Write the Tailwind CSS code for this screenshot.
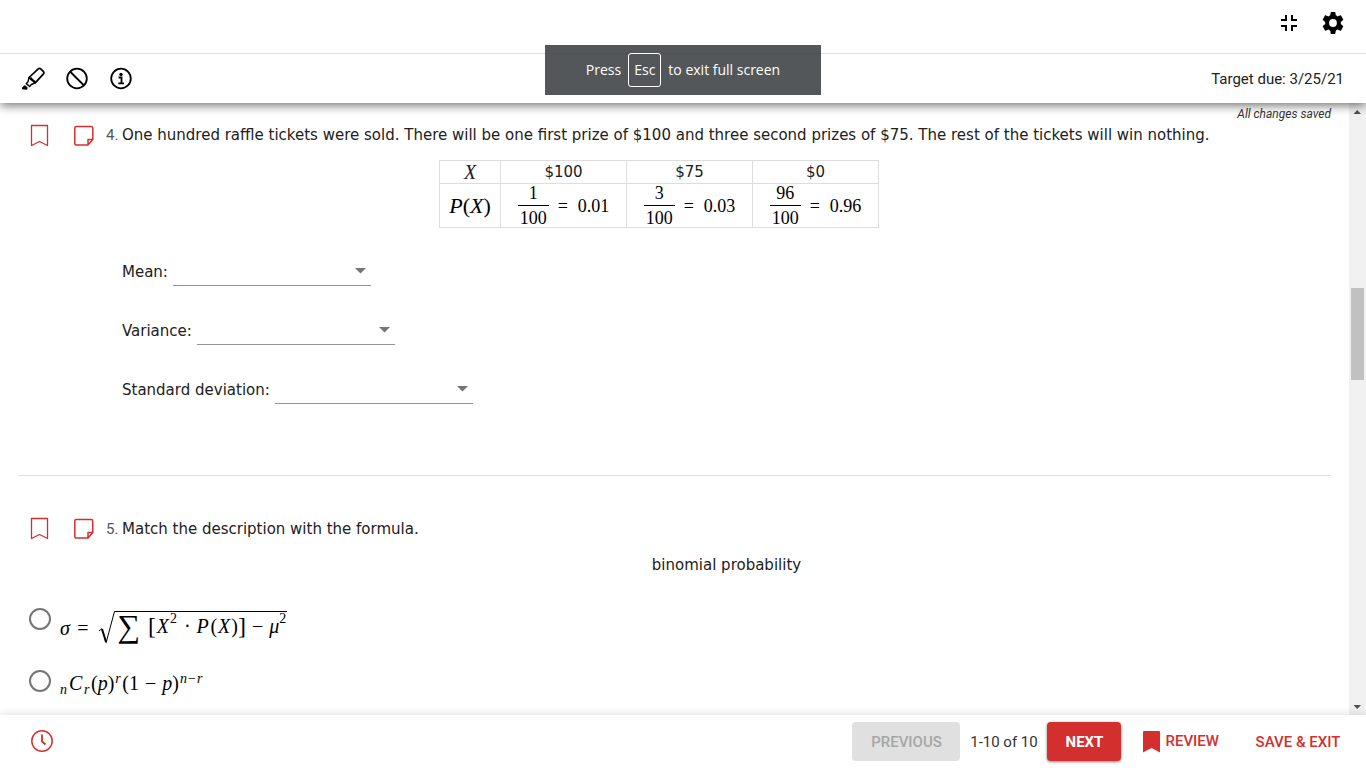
<!doctype html>
<html lang="en">
  <head>
    <meta charset="UTF-8" />
    <meta name="viewport" content="width=device-width, initial-scale=1.0" />
    <title>Assignment</title>
    <script src="https://cdn.jsdelivr.net/npm/@tailwindcss/browser@4"></script>
  </head>
  <body class="font-[Roboto,sans-serif] text-[#333333] bg-white">
    <div class="relative flex flex-col h-screen overflow-hidden">
      <header class="relative z-10 bg-white shadow-[0_2px_10px_rgba(0,0,0,0.6)]">
        <div class="flex items-center justify-end gap-5 h-[54px] px-[21px] pb-[8px] border-b border-[#e0e0e0] text-black">
          <button type="button" aria-label="Exit full screen">
            <svg class="w-6 h-6" viewBox="0 0 24 24" fill="none" stroke="currentColor" stroke-width="2">
              <path d="M4 9H9V4M20 9H15V4M4 15H9V20M20 15H15V20" />
            </svg>
          </button>
          <button type="button" aria-label="Settings">
            <svg class="w-6 h-6" viewBox="0 0 24 24" fill="currentColor">
              <path d="M19.800 13.100a8 8 0 0 0 0-2.200l2.300-1.800a.6.6 0 0 0 .14-.7l-2.200-3.800a.55.55 0 0 0-.68-.24l-2.700 1.100a8.200 8.200 0 0 0-1.900-1.100L14.350 1.500a.55.55 0 0 0-.55-.5h-3.600a.55.55 0 0 0-.55.5l-.41 2.860a8.200 8.200 0 0 0-1.900 1.100l-2.700-1.100a.55.55 0 0 0-.68.240L1.760 8.400a.6.6 0 0 0 .14.7l2.300 1.800a8 8 0 0 0 0 2.200l-2.300 1.800a.6.6 0 0 0-.14.7l2.200 3.800c.14.24.43.34.68.24l2.700-1.100a8.200 8.200 0 0 0 1.900 1.100l.41 2.860c.05.3.27.5.55.5h3.600c.28 0 .5-.2.55-.5l.41-2.860a8.200 8.200 0 0 0 1.900-1.100l2.700 1.100c.25.1.54 0 .68-.24l2.200-3.800a.6.6 0 0 0-.14-.7zM12 15.900a3.900 3.900 0 1 1 0-7.800 3.900 3.900 0 0 1 0 7.800z" />
            </svg>
          </button>
        </div>
        <div class="flex items-center gap-5 h-[49px] px-[22px] text-black">
          <button type="button" aria-label="Highlighter">
            <svg class="w-6 h-6" viewBox="0 0 24 24" fill="none" stroke="currentColor" stroke-width="1.700" stroke-linejoin="round">
              <path d="M7 10.500L16.300 1.800Q17.500 .8 18.700 1.800L21.300 4.300Q22.500 5.500 21.500 6.900L13.200 15.800L7 10.500z" />
              <path d="M7 10.500L6 14.800L4.300 16.600L7.600 19.500L9.300 17.500L13.200 15.800M9 10.500Q9.500 13 13.500 15" stroke-width="1.400" />
              <path d="M.6 21.400L2.800 19.200L4.800 21L4.300 22z" fill="currentColor" />
            </svg>
          </button>
          <button type="button" aria-label="Eliminate answers">
            <svg class="w-6 h-6" viewBox="0 0 24 24" fill="none" stroke="currentColor" stroke-width="1.800">
              <circle cx="11" cy="11.500" r="9.800" />
              <path d="M4 4.500L18 18.500" />
            </svg>
          </button>
          <button type="button" aria-label="Information">
            <svg class="w-6 h-6" viewBox="0 0 24 24" fill="none" stroke="currentColor" stroke-width="1.800">
              <circle cx="11" cy="11.500" r="9.800" />
              <circle cx="11" cy="7.500" r="1.700" fill="currentColor" stroke="none" />
              <path d="M8.500 10.500H11.500V16M8.300 16.300H14" />
            </svg>
          </button>
          <span class="ml-auto pt-[2px] text-[15px] text-[#212121]">Target due: 3/25/21</span>
        </div>
      </header>

      <div class="flex flex-1 min-h-0">
        <main class="flex-1 min-w-0 overflow-hidden pl-[18px] pr-[18px]">
          <p class="h-[20px] pt-[3px] text-right text-xs leading-4 italic">All changes saved</p>

          <section class="flex h-[353px] border-b border-[#e0e0e0]">
            <div class="flex gap-[22px] w-[104px] pl-[10px] text-[#d32f2f]">
              <button type="button" class="h-6" aria-label="Bookmark question 4">
                <svg class="w-6 h-6" viewBox="0 0 24 24" fill="none" stroke="currentColor" stroke-width="1.300" stroke-linejoin="round">
                  <path d="M3.500 2.500H19.500V22.500L11.500 18.500L3.500 22.500z" />
                </svg>
              </button>
              <button type="button" class="h-6" aria-label="Add note to question 4">
                <svg class="w-6 h-6" viewBox="0 0 24 24" fill="none" stroke="currentColor" stroke-width="1.500" stroke-linejoin="round">
                  <path d="M14 22H2.500Q.8 22 .8 20.500V5Q.8 3.500 2.500 3.500H17Q18.800 3.500 18.800 5V16.500L14 22V16.500H18.800" />
                </svg>
              </button>
            </div>
            <div class="flex-1 pt-px font-['DejaVu_Sans',sans-serif] text-[15px] leading-[22px] text-[#212121]">
              <div class="max-w-[1074px]">
                <p class="flex whitespace-nowrap"><span class="shrink-0 w-4 -ml-4 font-[Roboto,sans-serif] text-[#555555]">4.</span>One hundred raffle tickets were sold. There will be one first prize of $100 and three second prizes of $75. The rest of the tickets will win nothing.</p>
                <table class="mx-auto mt-[14px] border-collapse text-center text-[#212121]">
                  <tbody>
                    <tr class="h-[23px] leading-[22px]">
                      <th class="w-[61px] p-0 border border-[#dddddd] font-normal font-['Liberation_Serif',serif] text-xl leading-[22px] italic">X</th>
                      <td class="w-[126px] p-0 border border-[#dddddd]">$100</td>
                      <td class="w-[126px] p-0 border border-[#dddddd]">$75</td>
                      <td class="w-[126px] p-0 border border-[#dddddd]">$0</td>
                    </tr>
                    <tr class="h-[44px] font-['Liberation_Serif',serif] text-lg leading-5 text-black">
                      <th class="p-0 border border-[#dddddd] font-normal text-[22px]"><i>P</i>(<i>X</i>)</th>
                      <td class="p-0 border border-[#dddddd]">
                        <div class="flex items-center justify-center gap-[7px]">
                          <span class="flex flex-col leading-[18px]"><span class="border-b border-black px-[2px] pb-[3px]">1</span><span class="px-[2px] pt-[3px]">100</span></span>
                          <span class="flex gap-[8px]"><span class="w-[14px] text-center">=</span>0.01</span>
                        </div>
                      </td>
                      <td class="p-0 border border-[#dddddd]">
                        <div class="flex items-center justify-center gap-[7px]">
                          <span class="flex flex-col leading-[18px]"><span class="border-b border-black px-[2px] pb-[3px]">3</span><span class="px-[2px] pt-[3px]">100</span></span>
                          <span class="flex gap-[8px]"><span class="w-[14px] text-center">=</span>0.03</span>
                        </div>
                      </td>
                      <td class="p-0 border border-[#dddddd]">
                        <div class="flex items-center justify-center gap-[7px]">
                          <span class="flex flex-col leading-[18px]"><span class="border-b border-black px-[2px] pb-[3px]">96</span><span class="px-[2px] pt-[3px]">100</span></span>
                          <span class="flex gap-[8px]"><span class="w-[14px] text-center">=</span>0.96</span>
                        </div>
                      </td>
                    </tr>
                  </tbody>
                </table>
              </div>

              <div class="flex flex-col gap-[31px] mt-[30px]">
                <div class="flex items-center gap-[5px]">
                  <label for="mean">Mean:</label>
                  <span class="relative">
                    <select id="mean" class="block appearance-none w-[198px] h-[28px] border-b border-[#949494]"><option></option></select>
                    <svg class="absolute right-[5px] top-[10px] w-[11px] h-[6px] pointer-events-none" viewBox="0 0 11 6" fill="#757575"><path d="M0 0H11L5.500 5.500z" /></svg>
                  </span>
                </div>
                <div class="flex items-center gap-[5px]">
                  <label for="variance">Variance:</label>
                  <span class="relative">
                    <select id="variance" class="block appearance-none w-[198px] h-[28px] border-b border-[#949494]"><option></option></select>
                    <svg class="absolute right-[5px] top-[10px] w-[11px] h-[6px] pointer-events-none" viewBox="0 0 11 6" fill="#757575"><path d="M0 0H11L5.500 5.500z" /></svg>
                  </span>
                </div>
                <div class="flex items-center gap-[5px]">
                  <label for="deviation">Standard deviation:</label>
                  <span class="relative">
                    <select id="deviation" class="block appearance-none w-[198px] h-[28px] border-b border-[#949494]"><option></option></select>
                    <svg class="absolute right-[5px] top-[10px] w-[11px] h-[6px] pointer-events-none" viewBox="0 0 11 6" fill="#757575"><path d="M0 0H11L5.500 5.500z" /></svg>
                  </span>
                </div>
              </div>
            </div>
          </section>

          <section class="pt-[40px]">
            <div class="flex">
              <div class="flex gap-[22px] w-[104px] pl-[10px] text-[#d32f2f]">
                <button type="button" class="h-6" aria-label="Bookmark question 5">
                  <svg class="w-6 h-6" viewBox="0 0 24 24" fill="none" stroke="currentColor" stroke-width="1.300" stroke-linejoin="round">
                    <path d="M3.500 2.500H19.500V22.500L11.500 18.500L3.500 22.500z" />
                  </svg>
                </button>
                <button type="button" class="h-6" aria-label="Add note to question 5">
                  <svg class="w-6 h-6" viewBox="0 0 24 24" fill="none" stroke="currentColor" stroke-width="1.500" stroke-linejoin="round">
                    <path d="M14 22H2.500Q.8 22 .8 20.500V5Q.8 3.500 2.500 3.500H17Q18.800 3.500 18.800 5V16.500L14 22V16.500H18.800" />
                  </svg>
                </button>
              </div>
              <div class="flex-1 pt-[2px] font-['DejaVu_Sans',sans-serif] text-[15px] leading-[22px] text-[#212121]">
                <p class="flex"><span class="shrink-0 w-4 -ml-4 font-[Roboto,sans-serif] text-[#555555]">5.</span>Match the description with the formula.</p>
                <p class="mt-[14px] text-center">binomial probability</p>
              </div>
            </div>

            <div class="flex flex-col gap-[22px] mt-[29px] pl-[11px] font-['Liberation_Serif',serif] text-xl leading-5 text-black">
              <div class="flex items-start h-10 gap-[9px]">
                <input type="radio" id="sigma" name="formula" class="appearance-none w-[22px] h-[22px] mt-[3px] rounded-full border-2 border-[#757575]" />
                <label for="sigma" class="flex items-center pt-[6px]">
                  <i>σ</i><span class="w-[14px] ml-[6px] text-center">=</span>
                  <svg class="w-[18px] h-[34px] ml-[8px]" viewBox="0 0 18 34" fill="none" stroke="currentColor">
                    <path d="M1 20L4 17.500" />
                    <path d="M4 18L8 31" stroke-width="2" />
                    <path d="M8 32L16.500 .5H18" />
                  </svg>
                  <span class="flex items-center h-[34px] border-t border-black pb-[5px]">
                    <span class="w-[26px] text-center text-[32px]">∑</span>
                    <span class="ml-[6px] text-2xl">[</span><i class="w-[14px] text-center">X</i><sup class="w-2 text-sm">2</sup>
                    <span class="mx-[6px]">·</span>
                    <i class="w-[14px]">P</i>(<i class="w-[14px] text-center">X</i>)<span class="text-2xl">]</span>
                    <span class="mx-[6px]">−</span>
                    <i>μ</i><sup class="w-2 text-sm">2</sup>
                  </span>
                </label>
              </div>
              <div class="flex items-start gap-[9px]">
                <input type="radio" id="binomial" name="formula" class="appearance-none w-[22px] h-[22px] mt-[3px] rounded-full border-2 border-[#757575]" />
                <label for="binomial" class="flex items-baseline pt-[6px]">
                  <sub class="w-[9px] text-sm italic">n</sub><i class="w-[15px]">C</i><sub class="w-[7px] text-sm italic">r</sub>
                  (<i>p</i>)<sup class="w-2 pl-px text-sm italic">r</sup>
                  <span>(1</span><span class="mx-[6px]">−</span><i>p</i>)<sup class="flex gap-px pl-px text-sm"><i>n</i>−<i>r</i></sup>
                </label>
              </div>
            </div>
          </section>
        </main>

        <div class="flex flex-col w-[17px] bg-[#f1f1f1]" aria-hidden="true">
          <svg class="w-[17px] h-[17px]" viewBox="0 0 17 17" fill="#505050"><path d="M4.500 11H12L8.250 7z" /></svg>
          <div class="flex-1 pt-[168px] px-[2px]"><div class="h-[92px] bg-[#c1c1c1]"></div></div>
          <svg class="w-[17px] h-[17px]" viewBox="0 0 17 17" fill="#505050"><path d="M4.500 7H12L8.250 11z" /></svg>
        </div>
      </div>

      <footer class="relative z-10 flex items-center h-[53px] pl-[30px] pr-[24px] bg-white text-[15px] shadow-[0_0_10px_rgba(0,0,0,0.15)]">
        <button type="button" class="mr-auto text-[#d32f2f]" aria-label="Timer">
          <svg class="w-6 h-6" viewBox="0 0 24 24" fill="none" stroke="currentColor" stroke-width="1.500">
            <circle cx="12" cy="11" r="10.200" />
            <path d="M12 4.500V11.500L15.500 14.500" stroke-width="1.800" />
          </svg>
        </button>
        <button type="button" disabled class="w-[108px] h-[39px] pt-px rounded bg-[#e0e0e0] text-[#a6a6a6] font-medium">PREVIOUS</button>
        <span class="w-[87px] pt-px text-center">1-10 of 10</span>
        <button type="button" class="w-[74px] h-[39px] pt-px rounded bg-[#d32f2f] text-white font-bold shadow-[0_1px_3px_rgba(0,0,0,0.5)]">NEXT</button>
        <button type="button" class="flex items-center gap-[5px] ml-[22px] text-[#d32f2f] font-medium">
          <svg class="w-[17px] h-[22px]" viewBox="0 0 17 22" fill="currentColor"><path d="M1 0H16Q17 0 17 1V21.500L8.500 17L0 21.500V1Q0 0 1 0z" /></svg>
          REVIEW
        </button>
        <button type="button" class="w-[88px] ml-[35px] pt-px text-[#d32f2f] font-medium">SAVE &amp; EXIT</button>
      </footer>

      <div class="absolute z-20 top-[45px] left-1/2 -translate-x-1/2 flex items-center justify-center gap-[7px] w-[276px] h-[50px] bg-[#373b3f]/86 font-['Open_Sans',sans-serif] text-sm text-white">
        Press <kbd class="flex items-center h-[34px] px-[5px] border border-white rounded-[3px] font-[inherit] text-sm">Esc</kbd> to exit full screen
      </div>
    </div>
  </body>
</html>
